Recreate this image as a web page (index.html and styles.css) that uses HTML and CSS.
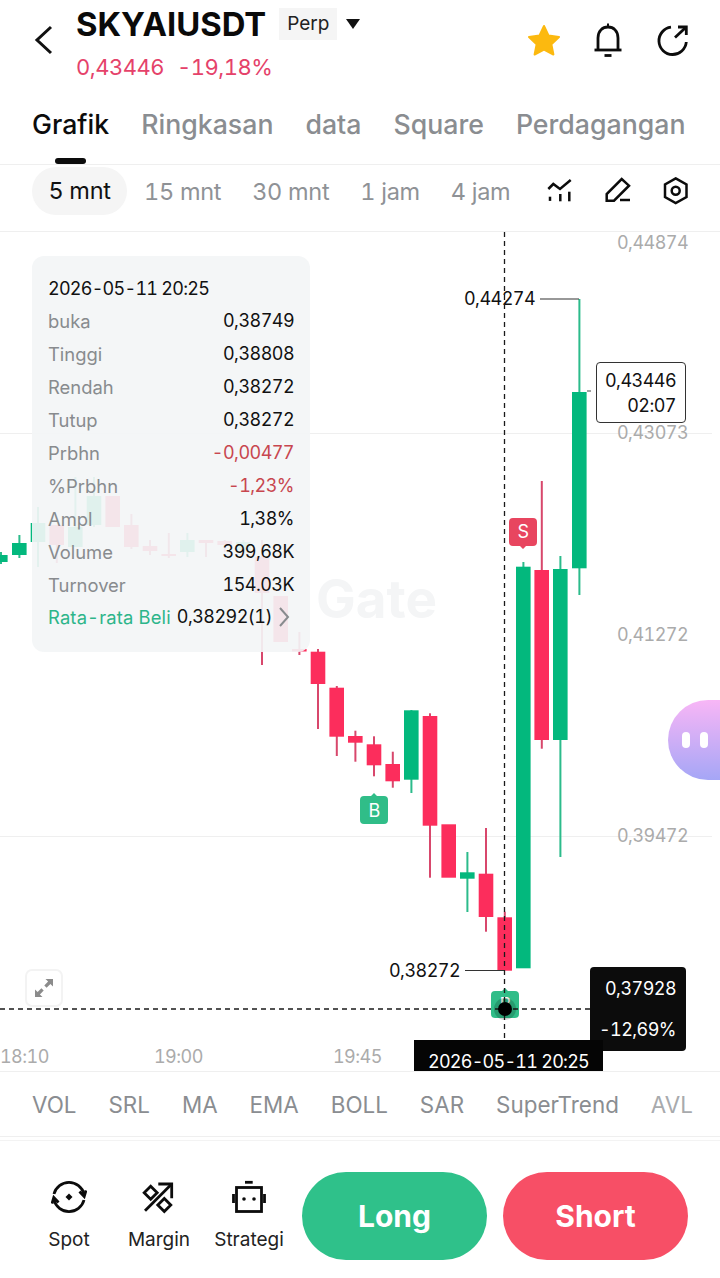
FILE: index.html
```html
<!DOCTYPE html>
<html lang="id">
<head>
    <meta charset="UTF-8">
    <meta name="viewport" content="width=device-width, initial-scale=1.0">
    <title>SKYAIUSDT Perp</title>
    <link rel="stylesheet" href="styles.css">
</head>
<body>
  <div class="app">

    <!-- header -->
    <header class="topbar">
      <svg class="back-icon" width="20" height="30" viewBox="0 0 20 30"><path d="M17 2 L3 15 L17 28"/></svg>
      <div class="title-block">
        <div class="title-row">
          <span class="symbol">SKYAIUSDT</span>
          <span class="chip">Perp</span>
          <span class="caret"></span>
        </div>
        <div class="price-row">
          <span>0,43446</span>
          <span>-19,18%</span>
        </div>
      </div>
      <div class="top-icons">
        <svg class="star-icon" width="36" height="34" viewBox="0 0 36 34"><polygon points="18,3 22.6,12.6 33,14 25.4,21.4 27.4,31.5 18,26.6 8.6,31.5 10.6,21.4 3,14 13.4,12.6"/></svg>
        <svg class="line-icon" width="30" height="36" viewBox="0 0 30 36"><path d="M5 28 V16 C5 9 9.5 5 15 5 C20.5 5 25 9 25 16 V28"/><path d="M1.5 28 H28.5"/><path d="M11.5 33.5 H18.5"/><path d="M14 3 H16"/></svg>
        <svg class="line-icon share-icon" width="34" height="34" viewBox="0 0 34 34"><path d="M15 4.2 A13.7 13.7 0 1 0 30.3 19"/><path d="M19 14.5 L30 4.3"/><path d="M22 4 H30.3 V12"/></svg>
      </div>
    </header>

    <!-- tabs -->
    <nav class="tabs">
      <span class="tab tab-active">Grafik</span>
      <span class="tab">Ringkasan</span>
      <span class="tab">data</span>
      <span class="tab">Square</span>
      <span class="tab">Perdagangan</span>
    </nav>

    <!-- timeframe -->
    <div class="timeframes">
      <span class="tf tf-active">5 mnt</span>
      <span class="tf">15 mnt</span>
      <span class="tf">30 mnt</span>
      <span class="tf">1 jam</span>
      <span class="tf">4 jam</span>
      <div class="tf-icons">
        <svg class="line-icon thin" width="28" height="28" viewBox="0 0 28 28"><path d="M2.3 12 L7.3 7 L14 12 L24.7 3"/><path d="M4 19.7 V23.9"/><path d="M14.3 17 V24.3"/><path d="M23.3 14.7 V24.3"/></svg>
        <svg class="line-icon thin" width="28" height="28" viewBox="0 0 28 28"><path d="M2.7 23.7 V17 L17.7 2 L25 8.7 L10 23.7 Z"/><path d="M16 23 H26"/></svg>
        <svg class="line-icon thin" width="28" height="28" viewBox="0 0 28 28"><polygon points="13.7,1.4 24.5,7.5 24.5,20 13.7,26 3,20 3,7.5"/><circle cx="13.7" cy="13.7" r="4"/></svg>
      </div>
    </div>

    <!-- chart -->
    <div class="chart">
      <svg class="chart-svg" width="720" height="839" viewBox="0 232 720 839">
        <path class="grid" d="M0 433.5 H712 M0 836.5 H712"/>
        <text class="watermark" x="316" y="618">Gate</text>

        <g class="candles-up">
          <rect class="wick" x="0" y="552" width="2" height="12"/><rect x="-7" y="555" width="14.6" height="7"/>
          <rect class="wick" x="18.4" y="535" width="2" height="23"/><rect x="12" y="543" width="14.6" height="12"/>
          <rect class="wick" x="37" y="507" width="2" height="60"/><rect x="30.7" y="523" width="14.6" height="19"/>
          <rect class="wick" x="74.4" y="477" width="2" height="70"/><rect x="68" y="527" width="14.6" height="20"/>
          <rect class="wick" x="93" y="477" width="2" height="50"/><rect x="86.7" y="496" width="14.6" height="29"/>
          <rect class="wick" x="186.4" y="533" width="2" height="24"/><rect x="180" y="540" width="14.6" height="12"/>
          <rect class="wick" x="242.4" y="540" width="2" height="16"/><rect x="236" y="542" width="14.6" height="8"/>
          <rect class="wick" x="410.4" y="710" width="2" height="83"/><rect x="404" y="710.3" width="14.6" height="69.4"/>
          <rect class="wick" x="466.4" y="852" width="2" height="60"/><rect x="460" y="872.3" width="14.6" height="6.4"/>
          <rect class="wick" x="522.4" y="562" width="2" height="10"/><rect x="516" y="566.7" width="14.6" height="401.6"/>
          <rect class="wick" x="559.4" y="556" width="2" height="301"/><rect x="553" y="569" width="14.6" height="171"/>
          <rect class="wick" x="578.4" y="299" width="2" height="296"/><rect x="572" y="392" width="14.6" height="176.3"/>
        </g>

        <g class="candles-down">
          <rect class="wick" x="55.8" y="525" width="2" height="38"/><rect x="49.4" y="525" width="14.6" height="20"/>
          <rect class="wick" x="111.8" y="496" width="2" height="31"/><rect x="105.4" y="496" width="14.6" height="31"/>
          <rect class="wick" x="130.4" y="514" width="2" height="35"/><rect x="124" y="525" width="14.6" height="22"/>
          <rect class="wick" x="149" y="540" width="2" height="15"/><rect x="142.7" y="546" width="14.6" height="5"/>
          <rect class="wick" x="167.8" y="533" width="2" height="25"/><rect x="161.4" y="554" width="14.6" height="2"/>
          <rect class="wick" x="205" y="540" width="2" height="17"/><rect x="198.7" y="540" width="14.6" height="3"/>
          <rect class="wick" x="223.8" y="540" width="2" height="12"/><rect x="217.4" y="541" width="14.6" height="4"/>
          <rect class="wick" x="261" y="540" width="2" height="125"/><rect x="254.7" y="557" width="14.6" height="36"/>
          <rect class="wick" x="279.8" y="596" width="2" height="46"/><rect x="273.4" y="596" width="14.6" height="46"/>
          <rect class="wick" x="298.4" y="632" width="2" height="23"/><rect x="292" y="649" width="14.6" height="2.5"/>
          <rect class="wick" x="317" y="649" width="2" height="80"/><rect x="310.7" y="651.7" width="14.6" height="32.3"/>
          <rect class="wick" x="335.8" y="686" width="2" height="70"/><rect x="329.4" y="687.7" width="14.6" height="49"/>
          <rect class="wick" x="354.4" y="730.7" width="2" height="31"/><rect x="348" y="736" width="14.6" height="6.7"/>
          <rect class="wick" x="373" y="736.3" width="2" height="40"/><rect x="366.7" y="744.3" width="14.6" height="21"/>
          <rect class="wick" x="391.8" y="751.7" width="2" height="36"/><rect x="385.4" y="764" width="14.6" height="17.3"/>
          <rect class="wick" x="429" y="713.3" width="2" height="164.4"/><rect x="422.7" y="716" width="14.6" height="109.7"/>
          <rect x="441.4" y="824.3" width="14.6" height="53.4"/>
          <rect class="wick" x="485" y="828" width="2" height="103.7"/><rect x="478.7" y="873.7" width="14.6" height="43.3"/>
          <rect class="wick" x="503.8" y="911.7" width="2" height="20"/><rect x="497.4" y="917.3" width="14.6" height="53.4"/>
          <rect class="wick" x="540.8" y="481" width="2" height="267.7"/><rect x="534.4" y="570" width="14.6" height="170"/>
        </g>

        <g class="axis-labels">
          <text x="688" y="249">0,44874</text>
          <text x="688" y="439">0,43073</text>
          <text x="688" y="641">0,41272</text>
          <text x="688" y="842">0,39472</text>
        </g>
        <g class="time-labels">
          <text x="0" y="1063">18:10</text>
          <text x="154" y="1063">19:00</text>
          <text x="333" y="1063">19:45</text>
        </g>

        <g class="extreme-labels">
          <text x="535" y="305">0,44274</text>
          <text x="460" y="977">0,38272</text>
        </g>
        <path class="leader" d="M540 299 H579 M465 970.5 H505"/>
        <path class="price-tick" d="M587 391 H591"/>

        <!-- buy and sell marks -->
        <path class="mark-sell" d="M513 518 H533 Q537 518 537 522 V542 Q537 546 533 546 H526 L523 549 L520 546 H513 Q509 546 509 542 V522 Q509 518 513 518 Z"/>
        <text class="mark-letter" x="523" y="538">S</text>
        <path class="mark-buy" d="M364 796 H371 L374 793 L377 796 H384 Q388 796 388 800 V820 Q388 824 384 824 H364 Q360 824 360 820 V800 Q360 796 364 796 Z"/>
        <text class="mark-letter" x="374" y="817">B</text>
        <path class="mark-buy" d="M495 991 H502 L505 988 L508 991 H515 Q519 991 519 995 V1014 Q519 1018 515 1018 H495 Q491 1018 491 1014 V995 Q491 991 495 991 Z"/>
        <text class="mark-letter" x="505" y="1011">B</text>

        <!-- crosshair -->
        <path class="crosshair" d="M504.5 232 V1040 M0 1009 H590"/>
        <circle class="cross-halo" cx="505" cy="1009" r="11"/>
        <circle cx="505" cy="1009" r="7"/>
      </svg>

      <!-- ohlc panel -->
      <div class="ohlc">
        <div class="ohlc-row ohlc-date"><span class="value date">2026-05-11 20:25</span></div>
        <div class="ohlc-row"><span>buka</span><span class="value">0,38749</span></div>
        <div class="ohlc-row"><span>Tinggi</span><span class="value">0,38808</span></div>
        <div class="ohlc-row"><span>Rendah</span><span class="value">0,38272</span></div>
        <div class="ohlc-row"><span>Tutup</span><span class="value">0,38272</span></div>
        <div class="ohlc-row"><span>Prbhn</span><span class="value red">-0,00477</span></div>
        <div class="ohlc-row"><span>%Prbhn</span><span class="value red">-1,23%</span></div>
        <div class="ohlc-row"><span>Ampl</span><span class="value">1,38%</span></div>
        <div class="ohlc-row"><span>Volume</span><span class="value">399,68K</span></div>
        <div class="ohlc-row"><span>Turnover</span><span class="value">154.03K</span></div>
        <div class="ohlc-avg">
          <span class="avg-label">Rata-rata Beli</span>
          <span class="value">0,38292(1)</span>
          <svg class="avg-arrow" width="12" height="22" viewBox="0 0 12 22"><path d="M2 2 L10 11 L2 20"/></svg>
        </div>
      </div>

      <div class="price-box">
        <span>0,43446</span>
        <span>02:07</span>
      </div>

      <div class="expand-btn">
        <svg width="20" height="20" viewBox="0 0 20 20"><path d="M19 1 V8.5 L16.4 5.9 L12.6 9.7 L10.3 7.4 L14.1 3.6 L11.5 1 Z"/><path d="M1 19 V11.5 L3.6 14.1 L7.4 10.3 L9.7 12.6 L5.9 16.4 L8.5 19 Z"/></svg>
      </div>

      <div class="cross-price">
        <span>0,37928</span>
        <span>-12,69%</span>
      </div>
      <div class="cross-time">2026-05-11 20:25</div>

      <div class="assistant">
        <span class="eye"></span>
        <span class="eye"></span>
      </div>
    </div>

    <!-- indicators -->
    <div class="indicators">
      <span>VOL</span>
      <span>SRL</span>
      <span>MA</span>
      <span>EMA</span>
      <span>BOLL</span>
      <span>SAR</span>
      <span>SuperTrend</span>
      <span class="fade">AVL</span>
    </div>

    <!-- bottom bar -->
    <div class="actions">
      <div class="shortcut">
        <svg class="line-icon" width="36" height="36" viewBox="0 0 36 36"><path d="M3 15 A15.5 15.5 0 0 1 33 15"/><path d="M28.5 12.5 L33.2 17.5 L35 11.5"/><path d="M33 21 A15.5 15.5 0 0 1 3 21"/><path d="M7.5 23.5 L2.8 18.5 L1 24.5"/><path class="dot" d="M18 14.5 L21.5 18 L18 21.5 L14.5 18 Z"/></svg>
        <span>Spot</span>
      </div>
      <div class="shortcut">
        <svg class="line-icon" width="36" height="36" viewBox="-1 -1 36 36"><path d="M3 30.7 L29.7 4"/><path d="M16.3 4 H29.7 V18.3"/><path d="M8.7 6.2 L15.2 12.7 L8.7 19.2 L2.2 12.7 Z"/><path d="M22.3 18.5 L28.8 25 L22.3 31.5 L15.8 25 Z"/></svg>
        <span>Margin</span>
      </div>
      <div class="shortcut">
        <svg class="line-icon" width="36" height="36" viewBox="-1 -1 36 36"><rect x="4.5" y="7.5" width="25" height="24"/><path d="M13 2.3 H20.7"/><path d="M1.5 14 V23"/><path d="M32.5 14 V23"/><circle class="dot" cx="12" cy="19" r="1.8"/><circle class="dot" cx="22" cy="19" r="1.8"/></svg>
        <span>Strategi</span>
      </div>
      <div class="btn btn-long">Long</div>
      <div class="btn btn-short">Short</div>
    </div>

  </div>
</body>
</html>
```

FILE: styles.css
```css
/* page */
body {
    margin: 0;
    padding: 0;
    background: #fff;
    font-family: Inter, 'Liberation Sans', sans-serif;
    font-variant-numeric: tabular-nums;
    color: #111;
}

.app {
    width: 720px;
    height: 1278px;
    overflow: hidden;
}

/* shared icon strokes */
.line-icon {
    fill: none;
    stroke: #0c0c0c;
    stroke-width: 2.8;
}

.line-icon.thin {
    stroke-width: 2.5;
}

.line-icon .dot {
    fill: #0c0c0c;
    stroke: none;
}

/* header */
.topbar {
    display: flex;
    height: 92px;
    box-sizing: border-box;
}

.back-icon {
    margin: 25px 22px 0 34px;
    fill: none;
    stroke: #111;
    stroke-width: 3;
}

.title-row {
    display: flex;
    align-items: center;
    height: 47px;
}

.symbol {
    font-size: 32.8px;
    font-weight: 700;
    color: #0a0a0a;
}

.chip {
    margin-left: 13px;
    padding: 0 8px;
    line-height: 32px;
    font-size: 19px;
    background: #f5f5f5;
    color: #222;
}

.caret {
    margin-left: 9px;
    border-left: 7px solid transparent;
    border-right: 7px solid transparent;
    border-top: 10px solid #111;
}

.price-row {
    display: flex;
    gap: 13px;
    margin-top: 5px;
    font-size: 22px;
    line-height: 30px;
    letter-spacing: -0.5px;
    color: #e5426a;
}

.top-icons {
    display: flex;
    align-items: center;
    gap: 31px;
    height: 36px;
    margin: 22px 30px 0 auto;
}

.share-icon {
    margin-left: 2px;
}

.star-icon {
    fill: #fcb90f;
    stroke: #fcb90f;
    stroke-width: 2;
    stroke-linejoin: round;
}

/* tabs */
.tabs {
    display: flex;
    gap: 32px;
    height: 73px;
    padding-left: 32px;
    box-sizing: border-box;
    border-bottom: 1px solid #efefef;
}

.tab {
    position: relative;
    margin-top: 13px;
    font-size: 26.7px;
    font-weight: 500;
    line-height: 38px;
    color: #8a8d91;
    white-space: nowrap;
}

.tab-active {
    color: #0c0c0c;
}

.tab-active::after {
    content: "";
    position: absolute;
    left: 23px;
    top: 53px;
    width: 31px;
    height: 6px;
    border-radius: 3px;
    background: #0c0c0c;
}

/* timeframe */
.timeframes {
    display: flex;
    align-items: center;
    gap: 31px;
    height: 67px;
    padding: 0 32px 14px;
    box-sizing: border-box;
    border-bottom: 1px solid #efefef;
}

.tf {
    flex-shrink: 0;
    font-size: 23.5px;
    letter-spacing: -0.3px;
    color: #8f9296;
    white-space: nowrap;
}

.tf-active {
    width: 95px;
    margin-right: -14px;
    box-sizing: border-box;
    text-align: center;
    line-height: 48px;
    border-radius: 24px;
    background: #f5f5f5;
    color: #111;
}

.tf-icons {
    display: flex;
    flex-shrink: 0;
    gap: 30px;
    margin-left: auto;
    margin-right: -2px;
}

/* chart */
.chart {
    position: relative;
    height: 840px;
    overflow: hidden;
    border-bottom: 1px solid #efefef;
    box-sizing: border-box;
}

.chart-svg {
    display: block;
    font-size: 18px;
    letter-spacing: -0.55px;
}

.grid {
    fill: none;
    stroke: #efefef;
}

.watermark {
    font-size: 53px;
    font-weight: 700;
    letter-spacing: 0;
    fill: #f4f5f6;
}

.candles-up {
    fill: #03b87d;
}

.candles-up .wick {
    fill: #2cbb8b;
}

.candles-down {
    fill: #fc2d5c;
}

.candles-down .wick {
    fill: #d8476c;
}

.axis-labels {
    fill: #ababab;
    text-anchor: end;
}

.time-labels {
    fill: #ababab;
}

.extreme-labels {
    fill: #111;
    text-anchor: end;
}

.leader {
    fill: none;
    stroke: #333;
    stroke-width: 1.2;
}

.price-tick {
    fill: none;
    stroke: #444;
}

.mark-sell {
    fill: #e8455f;
}

.mark-buy {
    fill: #30bd88;
}

.mark-letter {
    font-size: 18px;
    fill: #fff;
    text-anchor: middle;
}

.crosshair {
    fill: none;
    stroke: #1a1a1a;
    stroke-width: 1.3;
    stroke-dasharray: 5 4;
}

.cross-halo {
    fill: rgba(0, 0, 0, 0.18);
}

/* ohlc panel */
.ohlc {
    position: absolute;
    left: 32px;
    top: 24px;
    width: 278px;
    height: 396px;
    padding: 16px 16px 0;
    box-sizing: border-box;
    border-radius: 12px;
    background: rgba(243, 245, 246, 0.92);
    font-size: 18.4px;
    color: #888b8e;
}

.ohlc-row {
    display: flex;
    justify-content: space-between;
    align-items: center;
    height: 33px;
}

.ohlc-date {
    height: 32px;
}

.value {
    font-size: 18px;
    letter-spacing: -0.55px;
    color: #111;
}

.value.date {
    letter-spacing: -0.75px;
}

.value.red {
    color: #c8464f;
}

.ohlc-avg {
    display: flex;
    align-items: center;
    height: 31px;
    white-space: nowrap;
}

.avg-label {
    margin-right: 6px;
    letter-spacing: 0.15px;
    color: #2db58a;
}

.avg-arrow {
    flex-shrink: 0;
    margin-left: 6px;
    fill: none;
    stroke: #888b8e;
    stroke-width: 2;
}

/* floating price tags */
.price-box {
    position: absolute;
    left: 596px;
    top: 130px;
    width: 90px;
    height: 61px;
    padding-right: 9px;
    box-sizing: border-box;
    border: 1px solid #333;
    border-radius: 4px;
    background: #fff;
    font-size: 18px;
    letter-spacing: -0.55px;
    display: flex;
    flex-direction: column;
    align-items: flex-end;
    justify-content: center;
    gap: 4px;
}

.expand-btn {
    position: absolute;
    left: 25px;
    top: 737px;
    width: 38px;
    height: 38px;
    box-sizing: border-box;
    border: 2px solid #f3f3f3;
    border-radius: 7px;
    background: #fff;
    display: flex;
    align-items: center;
    justify-content: center;
    fill: #8b8b8b;
}

.cross-price {
    position: absolute;
    left: 590px;
    top: 735px;
    width: 96px;
    height: 84px;
    padding-right: 10px;
    box-sizing: border-box;
    border-radius: 4px;
    background: #0c0c0c;
    color: #fff;
    font-size: 18px;
    letter-spacing: -0.55px;
    display: flex;
    flex-direction: column;
    align-items: flex-end;
    justify-content: center;
    gap: 20px;
}

.cross-time {
    position: absolute;
    left: 414px;
    top: 808px;
    width: 189px;
    height: 40px;
    padding-top: 11px;
    box-sizing: border-box;
    background: #050505;
    color: #fff;
    font-size: 18px;
    letter-spacing: -0.75px;
    text-align: center;
}

.assistant {
    position: absolute;
    left: 668px;
    top: 468px;
    width: 52px;
    height: 80px;
    border-radius: 40px 0 0 40px;
    background: linear-gradient(#f8b6f6, #a5a6f6);
    display: flex;
    align-items: center;
    gap: 10px;
    padding-left: 14px;
    box-sizing: border-box;
}

.eye {
    width: 8px;
    height: 16px;
    border-radius: 4px;
    background: #fff;
}

/* indicators */
.indicators {
    display: flex;
    align-items: center;
    gap: 32px;
    height: 65px;
    padding-left: 32px;
    box-sizing: border-box;
    border-bottom: 1px solid #efefef;
    font-size: 22.4px;
    color: #8a8d91;
    white-space: nowrap;
}

.fade {
    color: #a8aaad;
}

/* bottom bar */
.actions {
    display: flex;
    margin-top: 3px;
    border-top: 1px solid #f3f3f3;
    height: 137px;
    box-sizing: border-box;
    padding-top: 31px;
}

.shortcut {
    display: flex;
    flex-direction: column;
    align-items: center;
    width: 90px;
    font-size: 19px;
    color: #222;
}

.shortcut svg {
    margin-top: 7px;
}

.shortcut span {
    margin-top: 13px;
    white-space: nowrap;
}

.shortcut:first-child {
    margin-left: 24px;
}

.btn {
    width: 185px;
    height: 88px;
    border-radius: 44px;
    color: #fff;
    font-size: 30px;
    font-weight: 700;
    line-height: 88px;
    text-align: center;
}

.btn-long {
    margin-left: 8px;
    background: #2fc18a;
}

.btn-short {
    margin-left: 16px;
    background: #f74f66;
}
```
